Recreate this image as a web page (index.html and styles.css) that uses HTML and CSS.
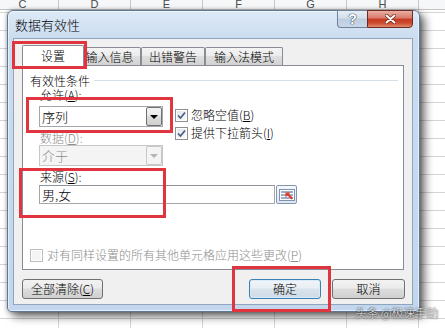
FILE: index.html
```html
<!DOCTYPE html>
<html lang="zh-CN">
<head>
    <meta charset="UTF-8">
    <title>数据有效性</title>
    <link rel="stylesheet" href="styles.css">
</head>
<body>
    <div class="col-heads">
        <span>C</span><span>D</span><span>E</span><span>F</span><span>G</span><span>H</span><span></span>
    </div>

    <div class="dialog">
        <div class="titlebar">
            <span class="title">数据有效性</span>
            <div class="caption-btns">
                <div class="cap-help">?</div>
                <div class="cap-close">
                    <svg width="11" height="10" viewBox="0 0 11 10">
                        <path d="M1.5 1.5 L9.5 8.5 M9.5 1.5 L1.5 8.5" stroke="#6e2418" stroke-width="3.4" stroke-linecap="round"/>
                        <path d="M1.5 1.5 L9.5 8.5 M9.5 1.5 L1.5 8.5" stroke="#fff" stroke-width="2" stroke-linecap="round"/>
                    </svg>
                </div>
            </div>
        </div>

        <div class="client">
            <div class="tabs">
                <div class="tab active">设置</div>
                <div class="tab tab-input">输入信息</div>
                <div class="tab tab-error">出错警告</div>
                <div class="tab tab-ime">输入法模式</div>
            </div>

            <div class="panel">
                <div class="group-title">
                    <span>有效性条件</span>
                    <span class="group-line"></span>
                </div>

                <div class="cond">
                    <div class="cond-left">
                        <div class="field-label">允许(<u>A</u>):</div>
                        <div class="combo">
                            <span class="combo-text">序列</span>
                            <span class="combo-btn"><i class="tri"></i></span>
                        </div>
                        <div class="field-label disabled gap">数据(<u>D</u>):</div>
                        <div class="combo disabled">
                            <span class="combo-text">介于</span>
                            <span class="combo-btn"><i class="tri"></i></span>
                        </div>
                    </div>
                    <div class="checks">
                        <div class="check">
                            <span class="cb"><svg width="9" height="9" viewBox="0 0 9 9"><path d="M1 4.5 L3.5 7 L8 1.5" fill="none" stroke="#4a5d86" stroke-width="1.7"/></svg></span>
                            <span>忽略空值(<u>B</u>)</span>
                        </div>
                        <div class="check">
                            <span class="cb"><svg width="9" height="9" viewBox="0 0 9 9"><path d="M1 4.5 L3.5 7 L8 1.5" fill="none" stroke="#4a5d86" stroke-width="1.7"/></svg></span>
                            <span>提供下拉箭头(<u>I</u>)</span>
                        </div>
                    </div>
                </div>

                <div class="source">
                    <div class="field-label">来源(<u>S</u>):</div>
                    <div class="source-row">
                        <div class="source-input">男,女</div>
                        <div class="ref-btn">
                            <svg width="16" height="12" viewBox="0 0 16 12">
                                <rect x="0.5" y="0.5" width="15" height="11" fill="#fff" stroke="#7d93b3"/>
                                <path d="M2 3 H14 M2 6 H14 M2 9 H14" stroke="#3f5f95" stroke-width="1"/>
                                <path d="M6.5 3.5 L11.5 3.5 L10 5 L14 9 L12.5 10.5 L8.5 6.5 L6.5 8.5 Z" fill="#dc3a2c"/>
                            </svg>
                        </div>
                    </div>
                </div>

                <div class="apply">
                    <span class="cb off"></span>
                    <span>对有同样设置的所有其他单元格应用这些更改(<u>P</u>)</span>
                </div>
            </div>

            <div class="footer">
                <button class="btn btn-clear">全部清除(<u>C</u>)</button>
                <button class="btn btn-ok">确定</button>
                <button class="btn btn-cancel">取消</button>
            </div>
        </div>
    </div>

    <!-- red highlight frames drawn over the dialog -->
    <div class="mark mark-tab"></div>
    <div class="mark mark-allow"></div>
    <div class="mark mark-source"></div>
    <div class="mark mark-ok"></div>

    <div class="watermark">头条 @极速手助</div>
</body>
</html>
```

FILE: styles.css
```css
* {
    box-sizing: border-box;
}
body {
    margin: 0;
    width: 445px;
    height: 328px;
    overflow: hidden;
    position: relative;
    font-family: "Noto Sans CJK SC", "Noto Sans", sans-serif;
    font-size: 12px;
    font-weight: 300;
    color: #000;
    background-color: #fff;
    background-image:
        linear-gradient(to right, #d4d4d4 1px, transparent 1px),
        linear-gradient(to bottom, #d4d4d4 1px, transparent 1px);
    background-size: 72px 100%, 100% 18px;
    background-position: -14px 0, 0 12px;
}
u {
    text-decoration: underline;
    text-underline-offset: 1px;
}

/* sheet column headers */
.col-heads {
    display: flex;
    margin-left: -14px;
    height: 10px;
    overflow: hidden;
    background: #f6f7f9;
    border-bottom: 1px solid #c6c6c6;
}
.col-heads span {
    flex: 0 0 72px;
    border-left: 1px solid #c6c6c6;
    text-align: center;
    font: 11px/9px "Liberation Sans", sans-serif;
    color: #4a4a4a;
}

/* dialog window */
.dialog {
    position: absolute;
    left: 7px;
    top: 10px;
    width: 413px;
    height: 302px;
    display: flex;
    flex-direction: column;
    padding: 0 6px 6px 5px;
    border: 1px solid #5d7896;
    border-radius: 6px 6px 4px 4px;
    background: linear-gradient(#dde9f6, #cbdcf0 28px, #c2d6ed);
    box-shadow: inset 0 0 0 1px rgba(255,255,255,0.55), 5px 5px 9px rgba(0,0,0,0.55), 0 0 4px rgba(0,0,0,0.35);
}
.titlebar {
    height: 27px;
    display: flex;
    align-items: center;
    padding-left: 2px;
}
.title {
    font-size: 13px;
    line-height: 16px;
}
.caption-btns {
    margin-left: auto;
    align-self: flex-start;
    margin-top: -1px;
    display: flex;
    height: 18px;
}
.cap-help {
    width: 30px;
    border: 1px solid #6f829a;
    border-right: none;
    border-radius: 0 0 0 4px;
    background: linear-gradient(#e6edf5, #d3dfeb 45%, #bccde0 50%, #c9d8e8);
    color: #fff;
    font: bold 14px/16px "Liberation Sans", sans-serif;
    text-align: center;
    text-shadow: 0 0 1px #34465e, 0 0 1px #34465e, 0 0 1px #34465e;
}
.cap-close {
    width: 46px;
    border: 1px solid #6e2a20;
    border-radius: 0 0 4px 0;
    background: linear-gradient(#eab0a6, #d9776a 45%, #c43a22 50%, #cc4a2e 75%, #df8b6d);
    display: flex;
    align-items: center;
    justify-content: center;
}

.client {
    flex: 1;
    display: flex;
    flex-direction: column;
    background: #f0f0f0;
    border: 1px solid #8fa4bd;
}

/* tabs */
.tabs {
    display: flex;
    align-items: flex-end;
    height: 20px;
    margin: 6px 0 0 8px;
}
.tab {
    height: 18px;
    border: 1px solid #898c95;
    border-bottom: none;
    border-radius: 2px 2px 0 0;
    background: linear-gradient(#f4f4f4, #ececec 45%, #dedede 50%, #d2d2d2);
    line-height: 17px;
    text-align: center;
}
.tab.active {
    width: 62px;
    height: 21px;
    margin-bottom: -1px;
    background: #fff;
    position: relative;
    z-index: 1;
    line-height: 20px;
}
.tab-input {
    width: 57px;
    padding-right: 6px;
}
.tab-error {
    width: 64px;
}
.tab-ime {
    width: 78px;
}

/* tab page */
.panel {
    margin-left: 8px;
    width: 382px;
    height: 205px;
    border: 1px solid #898c95;
    background: #fff;
}
.group-title {
    display: flex;
    align-items: center;
    margin: 8px 5px 0 7px;
    line-height: 13px;
}
.group-line {
    flex: 1;
    height: 1px;
    margin-left: 4px;
    background: #d5dfe5;
}
.cond {
    display: flex;
    padding-left: 16px;
    margin-top: 1px;
}
.field-label {
    line-height: 14px;
    padding-left: 1px;
}
.field-label.gap {
    margin-top: 4px;
}
.disabled {
    color: #8d8d8d;
}
.combo {
    width: 124px;
    height: 21px;
    margin-top: 4px;
    display: flex;
    align-items: center;
    border: 1px solid #a3a6ad;
    background: #fff;
}
.combo.disabled {
    margin-top: 0;
    background: #f4f4f4;
    border-color: #c3c6ca;
}
.combo-text {
    padding-left: 2px;
    font-size: 13px;
    line-height: 19px;
}
.combo-btn {
    margin-left: auto;
    width: 16px;
    height: 19px;
    display: flex;
    align-items: center;
    justify-content: center;
    border: 1px solid #707070;
    border-radius: 2px;
    background: linear-gradient(#f2f2f2, #ebebeb 45%, #dddddd 50%, #cfcfcf);
}
.tri {
    width: 0;
    height: 0;
    border-left: 4px solid transparent;
    border-right: 4px solid transparent;
    border-top: 4px solid #000;
}
.combo.disabled .combo-btn {
    border-color: #c8c8c8;
    background: #f4f4f4;
}
.combo.disabled .tri {
    border-top-color: #b4b4b4;
}
.checks {
    margin-left: 12px;
    padding-top: 20px;
    display: flex;
    flex-direction: column;
    gap: 4px;
}
.check {
    display: flex;
    align-items: center;
    gap: 3px;
    line-height: 14px;
}
.cb {
    width: 13px;
    height: 13px;
    display: flex;
    align-items: center;
    justify-content: center;
    border: 1px solid #8e8f8f;
    background: linear-gradient(135deg, #dfe4ea, #fafbfc);
    box-shadow: inset 0 0 0 1px #fff;
}
.cb.off {
    border-color: #bdbdbd;
    background: #f4f4f4;
}
.source {
    margin-top: 4px;
    padding-left: 16px;
}
.source-row {
    display: flex;
    margin-top: 1px;
    height: 19px;
}
.source-input {
    width: 236px;
    border: 1px solid #a3a6ad;
    border-top-color: #8f9299;
    background: #fff;
    padding-left: 2px;
    font-size: 13px;
    line-height: 17px;
}
.ref-btn {
    width: 21px;
    margin-left: 1px;
    display: flex;
    align-items: center;
    justify-content: center;
    border: 1px solid #8596ac;
    border-radius: 2px;
    background: linear-gradient(#f6f8fb, #dfe6ee);
}
.apply {
    display: flex;
    align-items: center;
    gap: 4px;
    margin: 44px 0 0 7px;
    line-height: 14px;
    color: #8d8d8d;
}

/* bottom buttons */
.footer {
    display: flex;
    margin: 9px 0 0 8px;
    padding-right: 7px;
}
.btn {
    height: 20px;
    padding: 0;
    border: 1px solid #707070;
    border-radius: 3px;
    background: linear-gradient(#f2f2f2, #ebebeb 45%, #dddddd 50%, #cfcfcf);
    font-family: "Noto Sans CJK SC", "Noto Sans", sans-serif;
    font-size: 12px;
    font-weight: 300;
    line-height: 18px;
    color: #000;
    text-align: center;
}
.btn-clear {
    width: 81px;
}
.btn-ok {
    width: 72px;
    margin-left: auto;
    border-color: #3c7fb1;
    box-shadow: inset 0 0 0 1px #d6ecf8;
    background: linear-gradient(#f1f5f9, #e8eef4 45%, #dae3ec 50%, #cfdbe6);
}
.btn-cancel {
    width: 73px;
    margin-left: 11px;
}

/* red annotation frames */
.mark {
    position: absolute;
    border: 3px solid #e0343f;
}
.mark-tab {
    left: 12px;
    top: 41px;
    width: 75px;
    height: 28px;
}
.mark-allow {
    left: 26px;
    top: 97px;
    width: 147px;
    height: 36px;
}
.mark-source {
    left: 19px;
    top: 168px;
    width: 147px;
    height: 50px;
}
.mark-ok {
    left: 232px;
    top: 266px;
    width: 99px;
    height: 46px;
}

.watermark {
    position: absolute;
    left: 355px;
    top: 306px;
    font-size: 12px;
    line-height: 14px;
    letter-spacing: -0.3px;
    color: rgba(255,255,255,0.92);
    text-shadow: 0 0 2px rgba(0,0,0,0.7), 0 0 1px rgba(0,0,0,0.6);
}
```
